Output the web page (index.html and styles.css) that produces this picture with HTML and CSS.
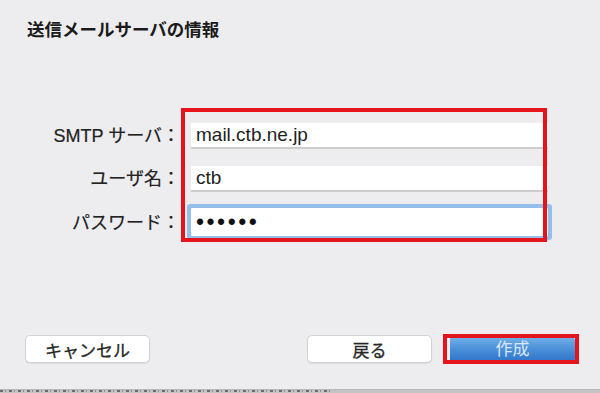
FILE: index.html
```html
<!DOCTYPE html>
<html lang="ja">
<head>
    <meta charset="UTF-8">
    <meta name="viewport" content="width=device-width, initial-scale=1.0">
    <title>送信メールサーバの情報</title>
    <link rel="stylesheet" href="styles.css">
</head>
<body>
    <div class="dialog">
        <h2 class="dialog-title">送信メールサーバの情報</h2>

        <form class="server-form" id="smtp-form">
            <label class="field-label" for="smtp">SMTP サーバ：</label>
            <input class="field" type="text" id="smtp" value="mail.ctb.ne.jp">

            <label class="field-label" for="user">ユーザ名：</label>
            <input class="field" type="text" id="user" value="ctb">

            <label class="field-label" for="pass">パスワード：</label>
            <input class="field field-focus" type="password" id="pass" value="ctbctb">

            <!-- annotation box around the inputs -->
            <div class="mark mark-fields"></div>
        </form>

        <div class="actions">
            <button type="button" class="btn">キャンセル</button>
            <div class="spacer"></div>
            <button type="button" class="btn">戻る</button>
            <div class="mark-wrap">
                <button type="submit" form="smtp-form" class="btn btn-primary">作成</button>
                <div class="mark mark-button"></div>
            </div>
        </div>

        <div class="bottom-edge"></div>
    </div>
</body>
</html>
```

FILE: styles.css
```css
html, body {
    margin: 0;
    padding: 0;
}
body {
    font-family: "Liberation Sans", "Noto Sans CJK JP", sans-serif;
    background-color: #ededf0;
    color: #222;
}
.dialog {
    width: 600px;
    height: 393px;
    display: flex;
    flex-direction: column;
    box-sizing: border-box;
}
.dialog-title {
    margin: 0;
    padding: 20px 0 0 27px;
    font-size: 17.5px;
    line-height: 20px;
    font-weight: bold;
    color: #1b1b1b;
}
.server-form {
    position: relative;
    margin-top: 83px;
    display: grid;
    grid-template-columns: 180px 357px;
    column-gap: 11px;
    row-gap: 17px;
    align-items: center;
}
.field-label {
    text-align: right;
    font-size: 18px;
    line-height: 26px;
    color: #222;
    -webkit-text-stroke: 0.2px #222;
}
.field {
    height: 26px;
    margin: 0;
    padding: 0 5px;
    border: none;
    border-bottom: 2px solid #cdcdcd;
    background-color: white;
    font-family: inherit;
    font-size: 19px;
    color: #1e1e1e;
    box-sizing: border-box;
    outline: none;
}
.field-focus {
    height: 28px;
    margin-top: -1px;
    border-bottom: none;
    border-radius: 1px;
    box-shadow: 0 0 0 4px #93bfea;
    font-size: 23px;
    letter-spacing: 2.5px;
    color: #111;
}
.mark {
    position: absolute;
    border: 4px solid #e5131b;
    box-sizing: border-box;
    pointer-events: none;
}
.mark-fields {
    left: 181px;
    top: -15px;
    width: 366px;
    height: 134px;
}
.actions {
    display: flex;
    align-items: center;
    margin-top: 99px;
    padding: 0 25px;
}
.spacer {
    flex: 1;
}
.btn {
    width: 125px;
    height: 28px;
    padding: 0;
    border: 1px solid #d2d2d4;
    border-radius: 5px;
    background-color: white;
    box-shadow: 0 1px 1px rgba(0,0,0,0.08);
    font-family: inherit;
    font-size: 17px;
    color: #262626;
    -webkit-text-stroke: 0.3px #262626;
    cursor: pointer;
}
.mark-wrap {
    position: relative;
    margin-left: 16px;
}
.btn-primary {
    display: block;
    width: 127px;
    height: 23px;
    border: none;
    border-left: 2px solid #e9eef7;
    border-radius: 2px;
    background: linear-gradient(#6eaee8, #4a8fd8 50%, #2f75c9);
    color: #d9e6f6;
    -webkit-text-stroke: 0;
    font-size: 17px;
    line-height: 23px;
    box-shadow: none;
}
.mark-button {
    left: -5px;
    top: -4px;
    width: 136px;
    height: 30px;
}
.bottom-edge {
    margin-top: auto;
    height: 4px;
    border-top: 1px solid #b9b9bb;
    background:
        repeating-linear-gradient(90deg, #6b6b6d 0 3px, transparent 3px 5px, #8d8d8f 5px 6px, transparent 6px 9px) 0 0 / 330px 2px no-repeat,
        #c4c4c6;
    box-sizing: border-box;
}
```
